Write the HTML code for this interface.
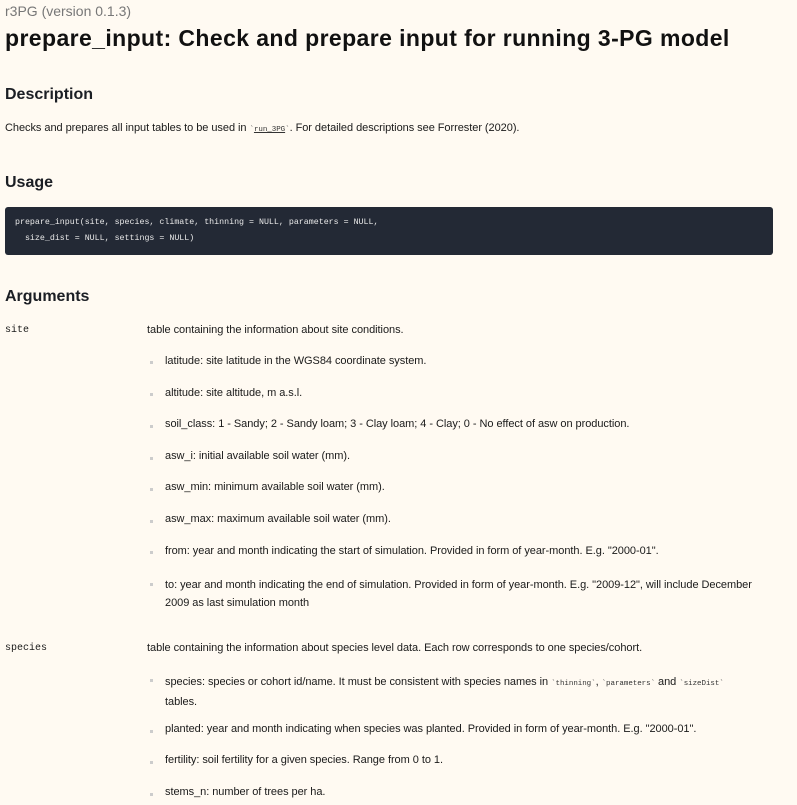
<!DOCTYPE html>
<html><head><meta charset="utf-8"><style>
html,body{margin:0;padding:0;background:#fffaf2;width:797px;height:805px;overflow:hidden;position:relative;font-family:"Liberation Sans",sans-serif;color:#1a1a1a}
.a{position:absolute;white-space:nowrap}
.t{font-size:11px;letter-spacing:-0.05px}
.h2{font-size:16px;font-weight:bold;color:#1b1e24}
.m{font-family:"Liberation Mono",monospace;font-size:10px}
.c{font-family:"Liberation Mono",monospace;font-size:7.5px;color:#333}
.b{position:absolute;width:3px;height:3px;background:#ccc}
</style></head><body>
<div class="a" style="left:5px;top:3px;font-size:14px;color:#777">r3PG (version 0.1.3)</div>
<div class="a" style="left:5px;top:25px;font-size:23px;font-weight:bold;color:#111;letter-spacing:0.4px">prepare_input: Check and prepare input for running 3-PG model</div>
<div class="a h2" style="left:5px;top:86px">Description</div>
<div class="a t" style="left:5px;top:122px">Checks and prepares all input tables to be used in <span class="c">`<u>run_3PG</u>`</span>. For detailed descriptions see Forrester (2020).</div>
<div class="a h2" style="left:5px;top:174px">Usage</div>
<div style="position:absolute;left:5px;top:207px;width:768px;height:48px;background:#232935;border-radius:3px"></div>
<div class="a" style="left:15px;top:215px;font-family:'Liberation Mono',monospace;font-size:8.3px;color:#e8e8e8;line-height:16px">prepare_input(site, species, climate, thinning = NULL, parameters = NULL,<br>&nbsp;&nbsp;size_dist = NULL, settings = NULL)</div>
<div class="a h2" style="left:5px;top:288px">Arguments</div>

<div class="a m" style="left:5px;top:325px">site</div>
<div class="a t" style="left:147px;top:324px">table containing the information about site conditions.</div>
<div class="b" style="left:150px;top:361px"></div><div class="a t" style="left:165px;top:355px">latitude: site latitude in the WGS84 coordinate system.</div>
<div class="b" style="left:150px;top:393px"></div><div class="a t" style="left:165px;top:387px">altitude: site altitude, m a.s.l.</div>
<div class="b" style="left:150px;top:425px"></div><div class="a t" style="left:165px;top:418px">soil_class: 1 - Sandy; 2 - Sandy loam; 3 - Clay loam; 4 - Clay; 0 - No effect of asw on production.</div>
<div class="b" style="left:150px;top:457px"></div><div class="a t" style="left:165px;top:450px">asw_i: initial available soil water (mm).</div>
<div class="b" style="left:150px;top:488px"></div><div class="a t" style="left:165px;top:481px">asw_min: minimum available soil water (mm).</div>
<div class="b" style="left:150px;top:520px"></div><div class="a t" style="left:165px;top:513px">asw_max: maximum available soil water (mm).</div>
<div class="b" style="left:150px;top:551px"></div><div class="a t" style="left:165px;top:545px">from: year and month indicating the start of simulation. Provided in form of year-month. E.g. "2000-01".</div>
<div class="b" style="left:150px;top:583px"></div><div class="a t" style="left:165px;top:576px;line-height:18px">to: year and month indicating the end of simulation. Provided in form of year-month. E.g. "2009-12", will include December<br>2009 as last simulation month</div>

<div class="a m" style="left:5px;top:643px">species</div>
<div class="a t" style="left:147px;top:642px">table containing the information about species level data. Each row corresponds to one species/cohort.</div>
<div class="b" style="left:150px;top:679px"></div><div class="a t" style="left:165px;top:673px;line-height:18px">species: species or cohort id/name. It must be consistent with species names in <span class="c">`thinning`</span>, <span class="c">`parameters`</span> and <span class="c">`sizeDist`</span><br>tables.</div>
<div class="b" style="left:150px;top:730px"></div><div class="a t" style="left:165px;top:723px">planted: year and month indicating when species was planted. Provided in form of year-month. E.g. "2000-01".</div>
<div class="b" style="left:150px;top:761px"></div><div class="a t" style="left:165px;top:754px">fertility: soil fertility for a given species. Range from 0 to 1.</div>
<div class="b" style="left:150px;top:793px"></div><div class="a t" style="left:165px;top:786px">stems_n: number of trees per ha.</div>
</body></html>
